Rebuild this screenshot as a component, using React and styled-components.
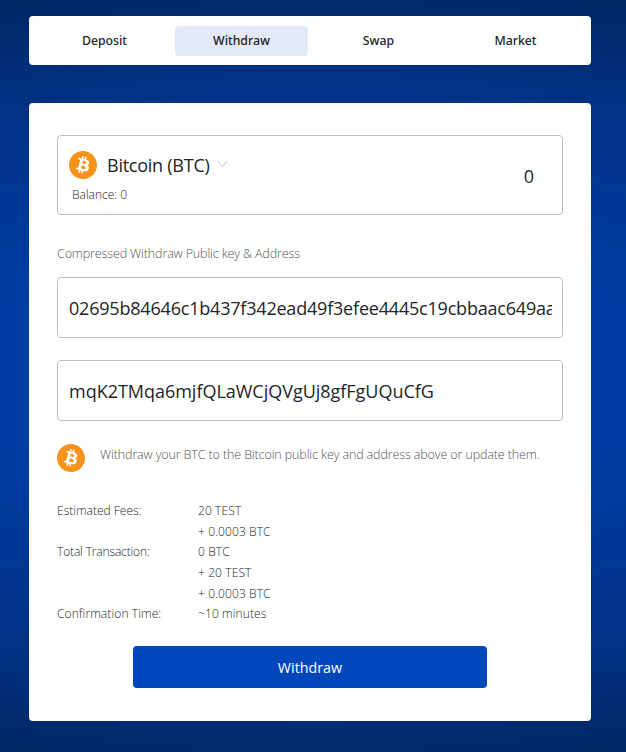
import React from 'react';
import styled, { createGlobalStyle } from 'styled-components';
import { SiBitcoin } from 'react-icons/si';

const GlobalStyle = createGlobalStyle`
  * { box-sizing: border-box; }
  body {
    margin: 0;
    font-family: "Open Sans", "Noto Sans", sans-serif;
    color: #212529;
  }
`;

const Page = styled.main`
  height: 752px;
  padding: 16px 35px 0 29px;
  background: radial-gradient(ellipse 900px 400px at 50% 50%, #0041ab 0%, #003da3 35%, #00338a 70%, #002d76 85%, #002a6c 94%, #002868 100%);
  overflow: hidden;
`;

const Tabs = styled.nav`
  display: grid;
  grid-template-columns: repeat(4, 133px);
  justify-content: space-between;
  align-items: center;
  height: 49px;
  padding: 0 9px;
  background: #fff;
  border-radius: 4px;
`;

const Tab = styled.button`
  height: 30px;
  padding: 0 0 1px;
  border: 0;
  border-radius: 4px;
  background: ${(p) => (p.$active ? '#e3e9f7' : 'transparent')};
  color: #212529;
  font: 500 12.3px/29px "Noto Sans", sans-serif;
`;

const Card = styled.section`
  display: flex;
  flex-direction: column;
  height: 618px;
  margin-top: 38px;
  padding: 32px 28px 33px;
  background: #fff;
  border-radius: 4px;
`;

const AssetBox = styled.div`
  display: flex;
  justify-content: space-between;
  height: 80px;
  padding: 14px 28px 0 11px;
  border: 1px solid #bcbdc0;
  border-radius: 4px;
`;

const AssetSelect = styled.div`
  display: flex;
  align-items: center;
  height: 29px;
`;

const CoinIcon = styled(SiBitcoin)`
  flex: none;
  width: 28px;
  height: 28px;
  color: #f7931a;
`;

const AssetName = styled.span`
  margin-left: 10px;
  font-size: 18px;
  font-weight: 400;
  line-height: 28px;
  letter-spacing: -0.25px;
`;

const Chevron = styled.svg`
  width: 11px;
  height: 8px;
  margin: 0 0 2px 7px;
  fill: none;
  stroke: #c4c4c4;
`;

const Balance = styled.div`
  margin: 6px 0 0 3px;
  font-size: 12px;
  font-weight: 300;
  line-height: 20px;
`;

const Amount = styled.div`
  font-size: 18px;
  font-weight: 400;
  line-height: 52px;
`;

const Label = styled.div`
  margin-top: 28px;
  height: 20px;
  font-size: 12.5px;
  line-height: 22px;
  font-weight: 300;
  letter-spacing: -0.13px;
  color: #50555a;
`;

const Field = styled.input`
  display: block;
  width: 100%;
  height: 61px;
  margin-top: ${(p) => p.$gap}px;
  padding: 0 10px 0 11px;
  border: 1px solid #bcbdc0;
  border-radius: 4px;
  outline: 0;
  color: #212529;
  font: 400 18px "Open Sans", sans-serif;
  letter-spacing: ${(p) => p.$track}px;
`;

const Hint = styled.div`
  display: flex;
  height: 28px;
  margin-top: 23px;
`;

const HintText = styled.span`
  margin-left: 15px;
  font-size: 12.5px;
  font-weight: 300;
  line-height: 22px;
  letter-spacing: -0.12px;
  color: #50555a;
  white-space: nowrap;
`;

const Summary = styled.dl`
  display: grid;
  grid-template-columns: 141px 1fr;
  grid-auto-rows: 20.65px;
  margin: 28px 0 0;
  font-size: 12px;
  font-weight: 300;
  line-height: 21px;
`;

const Term = styled.dt`
  grid-column: 1;
  letter-spacing: ${(p) => p.$track || 0}px;
`;

const Detail = styled.dd`
  grid-column: 2;
  margin: 0;
  letter-spacing: 0.1px;
`;

const Submit = styled.button`
  align-self: center;
  width: 354px;
  height: 42px;
  margin-top: auto;
  padding: 1px 0 0;
  border: 0;
  border-radius: 4px;
  background: #0047bb;
  color: #fff;
  font: 400 14.3px "Open Sans", sans-serif;
`;

const tabs = [
  { name: 'Deposit' },
  { name: 'Withdraw', active: true },
  { name: 'Swap' },
  { name: 'Market' },
];

const summary = [
  { term: 'Estimated Fees:', details: ['20 TEST', '+ 0.0003 BTC'] },
  { term: 'Total Transaction:', track: -0.15, details: ['0 BTC', '+ 20 TEST', '+ 0.0003 BTC'] },
  { term: 'Confirmation Time:', track: 0.1, details: ['~10 minutes'] },
];

export default function App() {
  return (
    <>
      <GlobalStyle />
      <Page>
        <Tabs>
          {tabs.map((t) => (
            <Tab key={t.name} $active={t.active}>{t.name}</Tab>
          ))}
        </Tabs>
        <Card>
          <AssetBox>
            <div>
              <AssetSelect>
                <CoinIcon />
                <AssetName>Bitcoin (BTC)</AssetName>
                <Chevron viewBox="0 0 11 8"><path d="M0.8 1 5.5 6.8 10.2 1" /></Chevron>
              </AssetSelect>
              <Balance>Balance: 0</Balance>
            </div>
            <Amount>0</Amount>
          </AssetBox>
          <Label>Compressed Withdraw Public key &amp; Address</Label>
          <Field
            $gap={14}
            $track={-0.2}
            readOnly
            value="02695b84646c1b437f342ead49f3efee4445c19cbbaac649aa"
          />
          <Field $gap={22} $track={-0.02} readOnly value="mqK2TMqa6mjfQLaWCjQVgUj8gfFgUQuCfG" />
          <Hint>
            <CoinIcon />
            <HintText>Withdraw your BTC to the Bitcoin public key and address above or update them.</HintText>
          </Hint>
          <Summary>
            {summary.map((s) => (
              <React.Fragment key={s.term}>
                <Term $track={s.track}>{s.term}</Term>
                {s.details.map((d) => <Detail key={d}>{d}</Detail>)}
              </React.Fragment>
            ))}
          </Summary>
          <Submit>Withdraw</Submit>
        </Card>
      </Page>
    </>
  );
}
